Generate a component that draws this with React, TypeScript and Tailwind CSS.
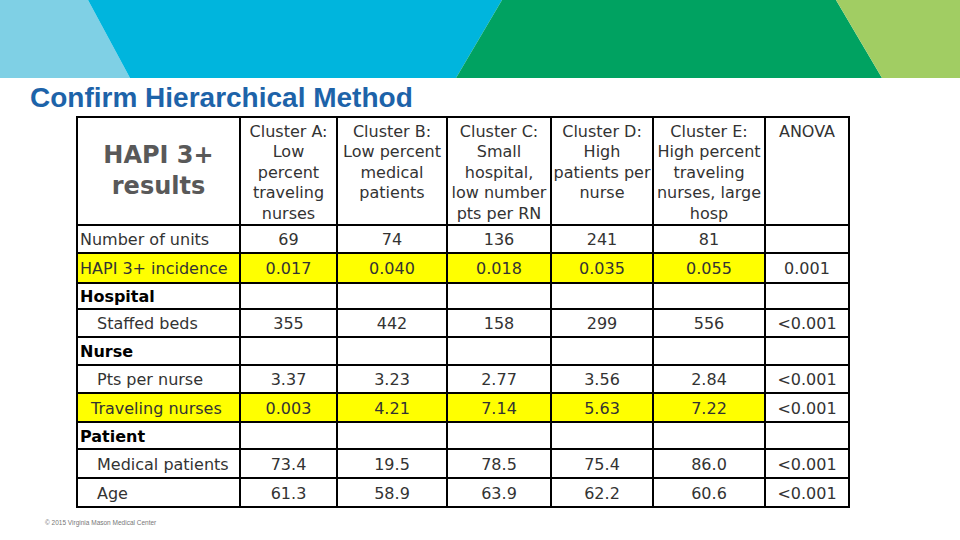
import React from "react";

type Row = {
  label: string;
  section?: boolean;
  indent?: string;
  hl?: boolean;
  vals?: string[];
};

const headers = [
  "Cluster A:\nLow\npercent\ntraveling\nnurses",
  "Cluster B:\nLow percent\nmedical\npatients",
  "Cluster C:\nSmall\nhospital,\nlow number\npts per RN",
  "Cluster D:\nHigh\npatients per\nnurse",
  "Cluster E:\nHigh percent\ntraveling\nnurses, large\nhosp",
  "ANOVA",
];

const rows: Row[] = [
  { label: "Number of units", vals: ["69", "74", "136", "241", "81", ""] },
  { label: "HAPI 3+ incidence", hl: true, vals: ["0.017", "0.040", "0.018", "0.035", "0.055", "0.001"] },
  { label: "Hospital", section: true },
  { label: "Staffed beds", indent: "pl-[19px]", vals: ["355", "442", "158", "299", "556", "<0.001"] },
  { label: "Nurse", section: true },
  { label: "Pts per nurse", indent: "pl-[19px]", vals: ["3.37", "3.23", "2.77", "3.56", "2.84", "<0.001"] },
  { label: "Traveling nurses", indent: "pl-[13px]", hl: true, vals: ["0.003", "4.21", "7.14", "5.63", "7.22", "<0.001"] },
  { label: "Patient", section: true },
  { label: "Medical patients", indent: "pl-[19px]", vals: ["73.4", "19.5", "78.5", "75.4", "86.0", "<0.001"] },
  { label: "Age", indent: "pl-[19px]", vals: ["61.3", "58.9", "63.9", "62.2", "60.6", "<0.001"] },
];

function Banner() {
  return (
    <svg width="960" height="78" viewBox="0 0 960 78" className="block">
      <polygon points="0,0 88,0 130,78 0,78" fill="#7fd0e5" />
      <polygon points="88,0 502,0 456,78 130,78" fill="#00b5dd" />
      <polygon points="502,0 836,0 882,78 456,78" fill="#00a261" />
      <polygon points="836,0 960,0 960,78 882,78" fill="#a1cd63" />
    </svg>
  );
}

export default function App() {
  return (
    <div className="w-[960px] h-[540px] bg-white overflow-hidden font-['DejaVu_Sans',Verdana,sans-serif] text-[#333]">
      <Banner />
      <h1 className="mt-[5px] pl-[30px] h-[30px] text-[28px] leading-[30px] font-bold text-[#1d63a9] font-['Liberation_Sans',Arial,sans-serif]">
        Confirm Hierarchical Method
      </h1>

      <div className="ml-[76px] mt-[3px] w-fit grid grid-cols-[161px_95px_108px_102px_100px_110px_82px] grid-rows-[106px_26px_28px_24px_26px_26px_26px_27px_25px_27px_27px] gap-[2px] p-[2px] bg-black text-[16px]">
        <div className="bg-white flex flex-col items-center justify-center text-[24px] leading-[31px] font-bold text-[#595959]">
          <span>HAPI 3+</span>
          <span>results</span>
        </div>
        {headers.map((h, i) => (
          <div key={i} className="bg-white pt-[4px] text-center leading-[20.4px] whitespace-pre-line">
            {h}
          </div>
        ))}

        {rows.map((r, ri) => (
          <React.Fragment key={ri}>
            <div
              className={`flex items-center pt-[2px] whitespace-nowrap ${r.hl ? "bg-[#ffff00]" : "bg-white"} ${
                r.section ? "pl-[2px] font-bold text-black" : r.indent ?? "pl-[2px]"
              }`}
            >
              {r.label}
            </div>
            {(r.vals ?? ["", "", "", "", "", ""]).map((v, ci) => (
              <div
                key={ci}
                className={`flex items-center justify-center pt-[2px] ${r.hl && ci < 5 ? "bg-[#ffff00]" : "bg-white"}`}
              >
                {v}
              </div>
            ))}
          </React.Fragment>
        ))}
      </div>

      <div className="mt-[11px] pl-[45px] text-[6.5px] leading-[8px] text-[#777] font-['Liberation_Sans',Arial,sans-serif]">
        © 2015 Virginia Mason Medical Center
      </div>
    </div>
  );
}
